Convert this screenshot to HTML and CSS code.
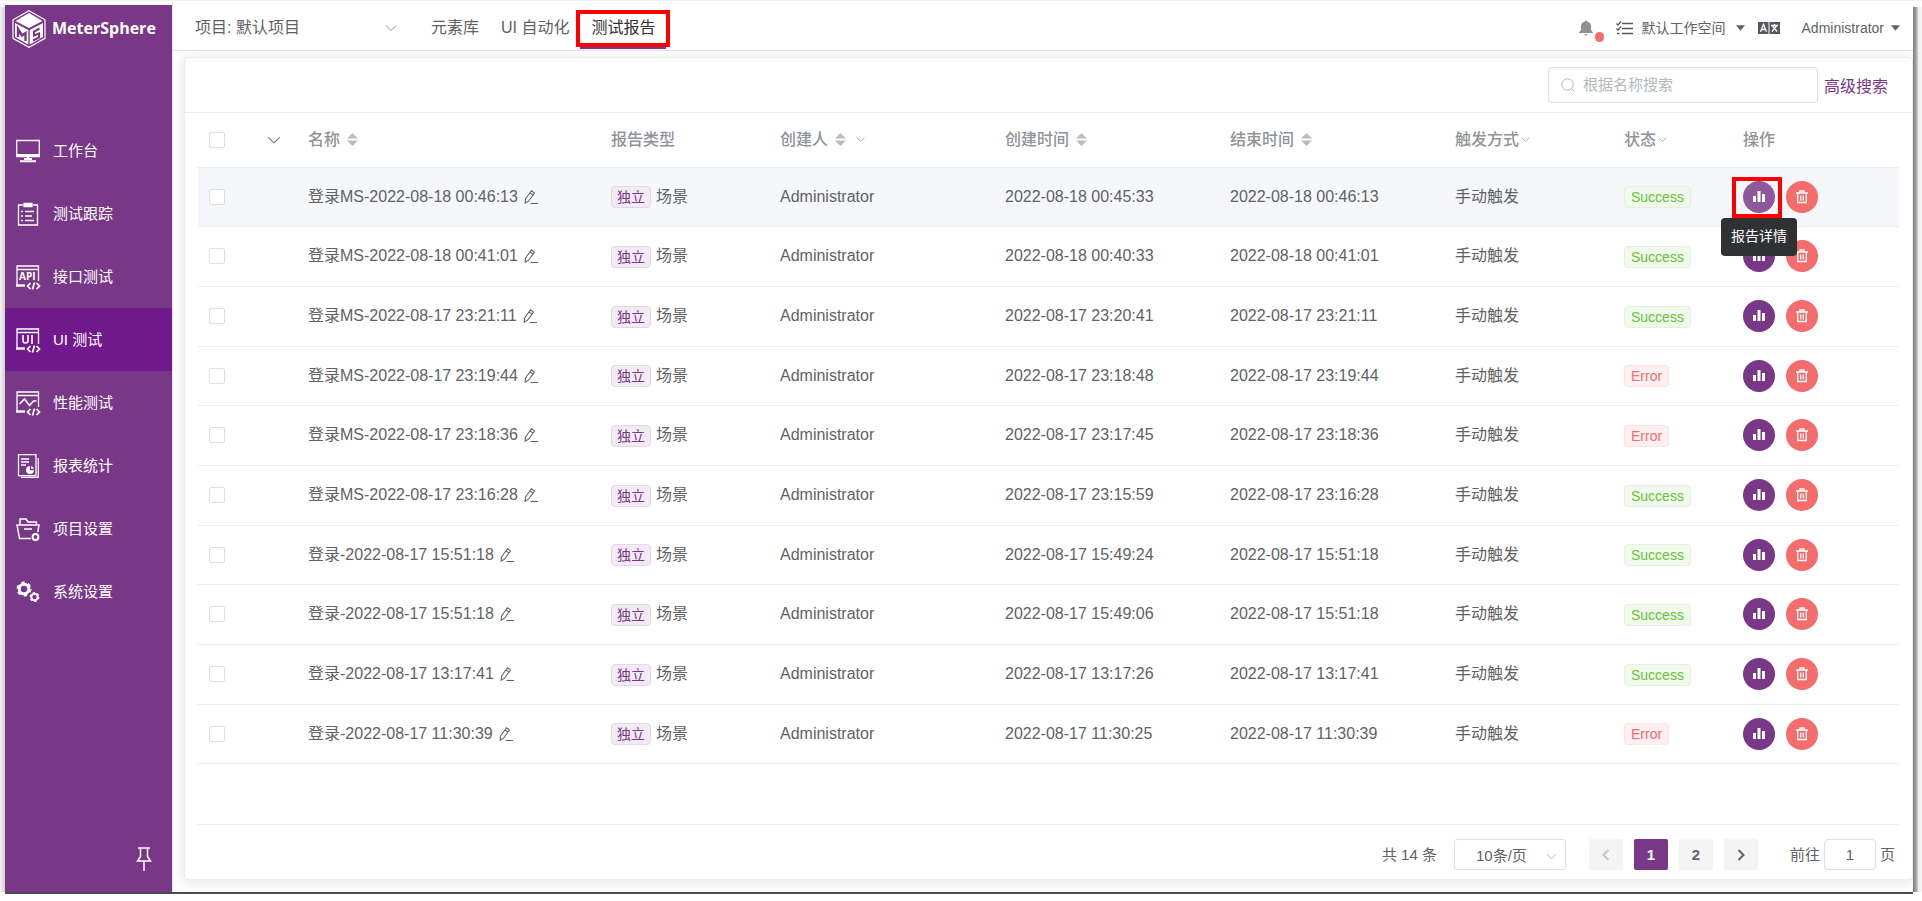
FILE: index.html
```html
<!DOCTYPE html>
<html lang="zh-CN">
<head>
<meta charset="utf-8">
<title>MeterSphere</title>
<link rel="stylesheet" href="styles.css">
</head>
<body>
<svg class="defs" aria-hidden="true">
  <symbol id="chev" viewBox="0 0 12 12"><path d="M1 3.500l5 5 5-5" fill="none" stroke="currentColor"/></symbol>
  <symbol id="sort" viewBox="0 0 12 14"><path d="M0 6L6 0l6 6zM0 8h12l-6 6z" fill="currentColor"/></symbol>
  <symbol id="caret" viewBox="0 0 10 6"><path d="M0 0h10L5 6z" fill="currentColor"/></symbol>
  <symbol id="edit" viewBox="0 0 14 14"><path d="M1.500 9L7.500 .8l3 2.200-6 8.200-3.300 2zM6 2.900l3 2.200M6.500 13.500H14" fill="none" stroke="currentColor" stroke-width="1.100"/></symbol>
  <symbol id="bars" viewBox="0 0 12 12"><path d="M0 5h3v6H0zM4.500 0h3v11h-3zM9 3h3v8H9z" fill="currentColor"/></symbol>
  <symbol id="trash" viewBox="0 0 12 14"><path d="M0 3h12M4 2.500V1h4v1.500M1.700 3v9.500h8.600V3M4.700 5.500v5M7.300 5.500v5" fill="none" stroke="currentColor" stroke-width="1.300"/></symbol>
</svg>
<div class="frame">
  <div class="edge-left"></div>
  <aside class="sidebar">
    <div class="logo">
      <svg width="34" height="38" viewBox="0 0 34 38"><path d="M17 .8l16 9v18.500l-16 9-16-9V9.800z" fill="none" stroke="#fff" stroke-width="1.200"/><path d="M17 3l13.500 8L17 18 3.500 11z" fill="#fff"/><path d="M3 13l13.300 7v14.500L3 27zM31 13l-13.300 7v14.500L31 27z" fill="#fff"/><path d="M6 27v-8l4 6.500 3.500-2.500v8" fill="none" stroke="#783887" stroke-width="2.400"/><path d="M27.500 18.500l-5.500 3v4l5-2v4l-6 3" fill="none" stroke="#783887" stroke-width="2"/></svg>
      <span>MeterSphere</span>
    </div>
    <nav class="menu">
      <a href="#"><svg viewBox="0 0 24 24"><path d="M.7 1.500h22.600v16H.7z"/><path d="M.7 16h22.600M8 20h8M4 22.300h16M12 18v3" stroke-width="2"/></svg>工作台</a>
      <a href="#"><svg viewBox="0 0 24 24"><path d="M7 3H2.500v20h19V3H17M9 9.500h9M9 14h7M9 18.500h9M5 9.500h2M5 14h2M5 18.500h2"/><path d="M8 1.500h8v3H8z" fill="currentColor"/></svg>测试跟踪</a>
      <a href="#"><svg viewBox="0 0 24 24"><path d="M22.500 16V1H1v19M1 4.500h21.500"/><path d="M0 20.500h9" stroke-width="2.400"/><path d="M14.500 18l-3 3 3 3M20.500 18l3 3-3 3M18.500 17.500l-2 7" stroke-width="1.700"/><text x="3" y="15">API</text></svg>接口测试</a>
      <a href="#" class="active"><svg viewBox="0 0 24 24"><path d="M22.500 16V1H1v19M1 4.500h21.500"/><path d="M0 20.500h9" stroke-width="2.400"/><path d="M14.500 18l-3 3 3 3M20.500 18l3 3-3 3M18.500 17.500l-2 7" stroke-width="1.700"/><path d="M7 7v5.500a2.500 2.500 0 005 0V7M16 7v9" stroke-width="1.600"/></svg>UI 测试</a>
      <a href="#"><svg viewBox="0 0 24 24"><path d="M22.500 16V1H1v19M1 4.500h21.500"/><path d="M0 20.500h9" stroke-width="2.400"/><path d="M14.500 18l-3 3 3 3M20.500 18l3 3-3 3M18.500 17.500l-2 7" stroke-width="1.700"/><path d="M3.500 13l5-5 5 6.500 4-4.500h3" stroke-width="1.600"/></svg>性能测试</a>
      <a href="#"><svg viewBox="0 0 24 24"><path d="M2.500 .7h17.500v21H2.500zM22.300 4v19.300H5M5 5h8M5 8h8M5 11h5"/><circle cx="14" cy="16" r="4" fill="currentColor" stroke="none"/><path d="M14.500 11v4.500H19" stroke="#783887"/></svg>报表统计</a>
      <a href="#"><svg viewBox="0 0 24 24"><path d="M15 21.500H3.500L1 8h22l-1.200 7M4 8V2h6l2 3h8.500v3M8 12h8" stroke-width="1.500"/><circle cx="19.500" cy="20" r="2.900" stroke-width="2"/></svg>项目设置</a>
      <a href="#"><svg viewBox="0 0 24 24"><circle cx="8" cy="9" r="4.800" stroke-width="3"/><circle cx="8" cy="9" r="6.500" stroke-width="2" stroke-dasharray="3.400 3.400"/><circle cx="18.500" cy="17" r="3.200" stroke-width="2"/><circle cx="18.500" cy="17" r="4.300" stroke-width="1.300" stroke-dasharray="2.250 2.250"/></svg>系统设置</a>
    </nav>
    <button class="pin" aria-label="固定"><svg width="16" height="24" viewBox="0 0 16 24"><path d="M2 1h12M4.500 1v8.500L1.500 14h13l-3-4.500V1M8 14v10" fill="none" stroke="currentColor" stroke-width="1.500"/></svg></button>
  </aside>
  <div class="page">
    <header class="topbar">
      <button class="project">项目: 默认项目<svg width="12" height="12"><use href="#chev"/></svg></button>
      <nav class="tabs"><a href="#">元素库</a><a href="#">UI 自动化</a><a href="#" class="current">测试报告</a></nav>
      <div class="tools">
        <button class="bell" aria-label="通知"><svg width="14" height="16" viewBox="0 0 14 16"><path d="M7 0l1 1.500c3 .5 4 2.500 4 5V10l2 2.500V13H0v-.5L2 10V6.500c0-2.500 1-4.500 4-5zM5 14h4l-2 1.800z" fill="#8f9196"/></svg><i></i></button>
        <svg class="tasks" width="17" height="14" viewBox="0 0 17 14"><path d="M6 2.500h11M6 7.500h11M6 12.500h11" stroke="#55585e" stroke-width="1.700"/><path d="M.5 2.500L2 4l3-3.500M.5 7.500L2 9l3-3.500M1 12.500h2.500" fill="none" stroke="#55585e" stroke-width="1.300"/></svg>
        <button class="space">默认工作空间<svg width="9" height="6"><use href="#caret"/></svg></button>
        <button class="lang" aria-label="语言"><svg width="22" height="12" viewBox="0 0 22 12"><path d="M0 0h22v12H0z" fill="#55585e"/><path d="M11 0v12" stroke="#fff"/><path d="M2.500 9.800L5.500 2.500l3 7.300M3.500 7.500h4M13 3.500h7M16.500 2v1.500M14.500 4l4.500 5.500M18.500 4L14 9.500" fill="none" stroke="#fff" stroke-width="1.300"/></svg></button>
        <button class="user">Administrator<svg width="9" height="6"><use href="#caret"/></svg></button>
      </div>
    </header>
    <main class="content">
      <section class="card">
        <div class="searchbar">
          <label class="search"><svg width="14" height="14" viewBox="0 0 14 14"><circle cx="6.500" cy="6.500" r="5.700"/><path d="M10.500 10.500l3 3"/></svg><input type="text" placeholder="根据名称搜索" aria-label="根据名称搜索"></label>
          <a href="#">高级搜索</a>
        </div>
        <div class="tablewrap">
        <table>
          <colgroup><col class="c54"><col class="c45"><col class="c303"><col class="c169"><col class="c225"><col class="c225"><col class="c225"><col class="c169"><col class="c119"><col class="c167"></colgroup>
          <thead><tr>
            <th><input type="checkbox" aria-label="全选"></th>
            <th><svg width="14" height="14"><use href="#chev"/></svg></th>
            <th>名称<svg class="sort" width="11" height="13"><use href="#sort"/></svg></th>
            <th>报告类型</th>
            <th>创建人<svg class="sort" width="11" height="13"><use href="#sort"/></svg><svg class="filter wide" width="9" height="9"><use href="#chev"/></svg></th>
            <th>创建时间<svg class="sort" width="11" height="13"><use href="#sort"/></svg></th>
            <th>结束时间<svg class="sort" width="11" height="13"><use href="#sort"/></svg></th>
            <th>触发方式<svg class="filter" width="9" height="9"><use href="#chev"/></svg></th>
            <th>状态<svg class="filter" width="9" height="9"><use href="#chev"/></svg></th>
            <th>操作</th>
          </tr></thead>
          <tbody id="rows"></tbody>
        </table>
        </div>
        <footer class="pager">
          <span class="total">共 14 条</span>
          <span class="size"><select aria-label="每页条数"><option>10条/页</option></select><svg width="11" height="11"><use href="#chev"/></svg></span>
          <div class="pages">
            <button disabled aria-label="上一页"><svg width="8" height="12" viewBox="0 0 8 12"><path d="M6.500 1l-5 5 5 5"/></svg></button>
            <button class="on">1</button><button>2</button>
            <button aria-label="下一页"><svg width="8" height="12" viewBox="0 0 8 12"><path d="M1.500 1l5 5-5 5"/></svg></button>
          </div>
          <label class="jump">前往<input type="text" value="1">页</label>
        </footer>
      </section>
    </main>
  </div>
  <div class="edge-right"></div>
</div>
<div class="edge-bottom"></div>
<script src="rows.js"></script>
</body>
</html>
```
FILE: rows.js
```js
const reports = [
  ["登录MS-2022-08-18 00:46:13", "2022-08-18 00:45:33", "2022-08-18 00:46:13", "Success"],
  ["登录MS-2022-08-18 00:41:01", "2022-08-18 00:40:33", "2022-08-18 00:41:01", "Success"],
  ["登录MS-2022-08-17 23:21:11", "2022-08-17 23:20:41", "2022-08-17 23:21:11", "Success"],
  ["登录MS-2022-08-17 23:19:44", "2022-08-17 23:18:48", "2022-08-17 23:19:44", "Error"],
  ["登录MS-2022-08-17 23:18:36", "2022-08-17 23:17:45", "2022-08-17 23:18:36", "Error"],
  ["登录MS-2022-08-17 23:16:28", "2022-08-17 23:15:59", "2022-08-17 23:16:28", "Success"],
  ["登录-2022-08-17 15:51:18", "2022-08-17 15:49:24", "2022-08-17 15:51:18", "Success"],
  ["登录-2022-08-17 15:51:18", "2022-08-17 15:49:06", "2022-08-17 15:51:18", "Success"],
  ["登录-2022-08-17 13:17:41", "2022-08-17 13:17:26", "2022-08-17 13:17:41", "Success"],
  ["登录-2022-08-17 11:30:39", "2022-08-17 11:30:25", "2022-08-17 11:30:39", "Error"]
];
document.getElementById("rows").innerHTML = reports.map(([name, start, end, status], i) => `
<tr${i ? "" : ' class="hover"'}>
  <td><input type="checkbox" aria-label="${name}"></td><td></td>
  <td>${name}<svg class="edit" width="14" height="14"><use href="#edit"/></svg></td>
  <td><span class="tag">独立</span>场景</td>
  <td>Administrator</td><td>${start}</td><td>${end}</td><td>手动触发</td>
  <td><span class="tag ${status.toLowerCase()}">${status}</span></td>
  <td><div class="actions">
    <span class="mark"><button class="detail" aria-label="报告详情"><svg width="12" height="12"><use href="#bars"/></svg></button>${i ? "" : '<span class="tip" role="tooltip">报告详情</span>'}</span>
    <button class="del" aria-label="删除"><svg width="12" height="14"><use href="#trash"/></svg></button>
  </div></td>
</tr>`).join("");
```
FILE: styles.css
```css
* { box-sizing: border-box; }
body {
  margin: 0;
  height: 100vh;
  border-top: 1px solid #f2f2f2;
  padding-bottom: 7px;
  display: flex;
  flex-direction: column;
  background: #fff;
  color: #606266;
  font: 16px/24px "Liberation Sans", "Noto Sans CJK SC", sans-serif;
}
a { color: inherit; text-decoration: none; }
button, input, select { font: inherit; color: inherit; margin: 0; }
button { border: 0; background: none; padding: 0; }
svg { flex: none; }
.defs { position: absolute; width: 0; height: 0; }

.frame { flex: 1; min-height: 0; display: flex; }
.edge-left { width: 5px; margin-top: 6px; background: linear-gradient(90deg, #f4f4f4, #d0d0d0); }
.edge-right { width: 9px; margin-top: 6px; background: linear-gradient(90deg, #777, #b5b5b5 45%, #eee 60%, #f4f4f4); }
.edge-bottom { height: 2px; margin: 0 9px 0 5px; background: #4c4c4c; }

.sidebar {
  width: 167px;
  margin-top: 4px;
  background: #783887;
  color: #fff;
  display: flex;
  flex-direction: column;
}
.logo {
  height: 114px;
  padding: 5px 0 0 7px;
  display: flex;
  align-items: flex-start;
  gap: 6px;
  font: bold 16px/36px "Open Sans", sans-serif;
}
.menu a {
  height: 63px;
  padding-left: 11px;
  display: flex;
  align-items: center;
  gap: 13px;
  font-size: 15px;
}
.menu a.active { background: #701a8e; }
.menu svg { width: 24px; height: 24px; overflow: visible; fill: none; stroke: currentColor; stroke-width: 1.300; }
.menu text { font: bold 10px "Open Sans", sans-serif; fill: #fff; stroke: none; }
.pin { margin: auto 20px 21px auto; height: 24px; }
.pin svg { display: block; }

.page { flex: 1; min-width: 0; display: flex; flex-direction: column; border-left: 1px solid #e4e4e4; }
.topbar { height: 50px; border-bottom: 1px solid #e2e2e2; display: flex; padding: 0 13px 0 22px; }
.project { width: 202px; padding-top: 4px; display: flex; align-items: center; justify-content: space-between; }
.project svg { color: #909399; }
.tabs { display: flex; align-items: flex-start; margin-left: 34px; }
.tabs a { padding-top: 15px; margin-right: 22px; white-space: nowrap; }
.tabs .current {
  margin: 9px 0 0 -15px;
  height: 37px;
  padding: 2px 11px 0;
  border: 4px solid red;
  box-shadow: 0 6px 0 -4px #783887;
  color: #303133;
}
.tools { margin-left: auto; padding-top: 4px; display: flex; align-items: center; font-size: 14px; }
.tools button { display: flex; align-items: center; }
.bell i { width: 9px; height: 10px; margin: 18px 0 0 2px; border-radius: 5px; background: #f56c6c; }
.tasks { margin: 0 9px 0 12px; }
.space { gap: 10px; }
.lang { margin: 0 22px 0 13px; }
.user { gap: 7px; }

.content { flex: 1; min-height: 0; padding: 6px 0 12px 11px; display: flex; background: #fdfdfd; }
.card {
  flex: 1;
  min-width: 0;
  display: flex;
  flex-direction: column;
  background: #fff;
  border: 1px solid #ebeef5;
  border-radius: 4px;
  box-shadow: 0 2px 12px rgba(0, 0, 0, .1);
}
.searchbar {
  height: 55px;
  padding-right: 24px;
  border-bottom: 1px solid #ebeef5;
  display: flex;
  align-items: center;
  justify-content: flex-end;
  gap: 6px;
  color: #783887;
}
.searchbar a { padding-top: 3px; }
.search { width: 270px; height: 36px; border: 1px solid #dcdfe6; border-radius: 4px; display: flex; align-items: center; padding: 0 12px; gap: 8px; }
.search svg { fill: none; stroke: #b0b4bc; }
.search input { border: 0; outline: 0; padding: 0; flex: 1; min-width: 0; font-size: 15px; }
.search input::placeholder { color: #b4b8c0; }

.tablewrap { padding: 0 13px; }
table { width: 100%; table-layout: fixed; border-collapse: collapse; }
.c54 { width: 54px; }
.c45 { width: 45px; }
.c119 { width: 119px; }
.c167 { width: 167px; }
.c169 { width: 169px; }
.c225 { width: 225px; }
.c303 { width: 303px; }
th, td { height: 60px; padding: 0 0 0 11px; text-align: left; border-bottom: 1px solid #ebeef5; white-space: nowrap; }
th { height: 54px; color: #909399; font-weight: 500; }
tbody tr:nth-child(3n+1) td { height: 59px; }
.hover td { background: #f5f7fa; }
th svg { vertical-align: middle; color: #c0c4cc; margin-top: -2px; }
th:nth-child(2) { padding-left: 15px; }
th:nth-child(2) svg { color: #808388; }
th .sort { margin-left: 7px; color: #b8bcc5; }
th .filter { margin-left: 2px; color: #909399; }
th .filter.wide { margin-left: 10px; }
.edit { margin-left: 6px; vertical-align: -2px; }
input[type=checkbox] {
  appearance: none;
  display: block;
  width: 16px;
  height: 16px;
  border: 1px solid #dcdfe6;
  border-radius: 2px;
  background: #fff;
}
.tag {
  display: inline-block;
  height: 22px;
  padding: 0 5px;
  margin-right: 5px;
  border: 1px solid #e4d7e7;
  border-radius: 4px;
  background: #f2ebf3;
  color: #783887;
  font-size: 14px;
  line-height: 20px;
  vertical-align: middle;
}
.tag.success { padding: 0 6px; border-color: #e1f3d8; background: #f0f9eb; color: #67c23a; }
.tag.error { padding: 0 6px; border-color: #fde2e2; background: #fef0f0; color: #f56c6c; }
.actions { display: flex; gap: 11px; }
.mark { position: relative; }
.actions button { width: 32px; height: 32px; border-radius: 50%; display: flex; align-items: center; justify-content: center; color: #fff; }
.detail { background: #783887; }
.del { background: #f56c6c; }
.hover .detail { background: #8f579c; }
.hover .mark::after { content: ""; position: absolute; inset: -4px -7px -5px -11px; border: 4px solid red; }
.tip {
  position: absolute;
  z-index: 1;
  top: 37px;
  left: -22px;
  height: 38px;
  padding: 0 10px;
  border-radius: 4px;
  background: #303133;
  color: #fff;
  font-size: 14px;
  line-height: 36px;
}

.pager {
  margin: auto 13px 0;
  height: 55px;
  padding: 0 4px 9px 0;
  border-top: 1px solid #ebeef5;
  display: flex;
  align-items: flex-end;
  justify-content: flex-end;
  font-size: 15px;
  line-height: 31px;
}
.total { margin-right: 17px; }
.size { position: relative; width: 112px; height: 31px; }
.size select { appearance: none; width: 100%; height: 100%; padding: 0 0 0 21px; border: 1px solid #dcdfe6; border-radius: 3px; background: #fff; }
.size svg { position: absolute; right: 9px; top: 12px; color: #b0b4bc; }
.pages { display: flex; gap: 11px; margin: 0 32px 0 23px; }
.pages button { width: 34px; height: 31px; border-radius: 2px; background: #f4f4f5; font-weight: bold; }
.pages .on { background: #783887; color: #fff; }
.pages svg { vertical-align: middle; margin-top: -3px; fill: none; stroke: #606266; stroke-width: 2; }
.pages :disabled svg { stroke: #c0c4cc; }
.jump { display: flex; gap: 4px; }
.jump input { width: 52px; height: 31px; border: 1px solid #dcdfe6; border-radius: 4px; text-align: center; padding: 0; }
```
